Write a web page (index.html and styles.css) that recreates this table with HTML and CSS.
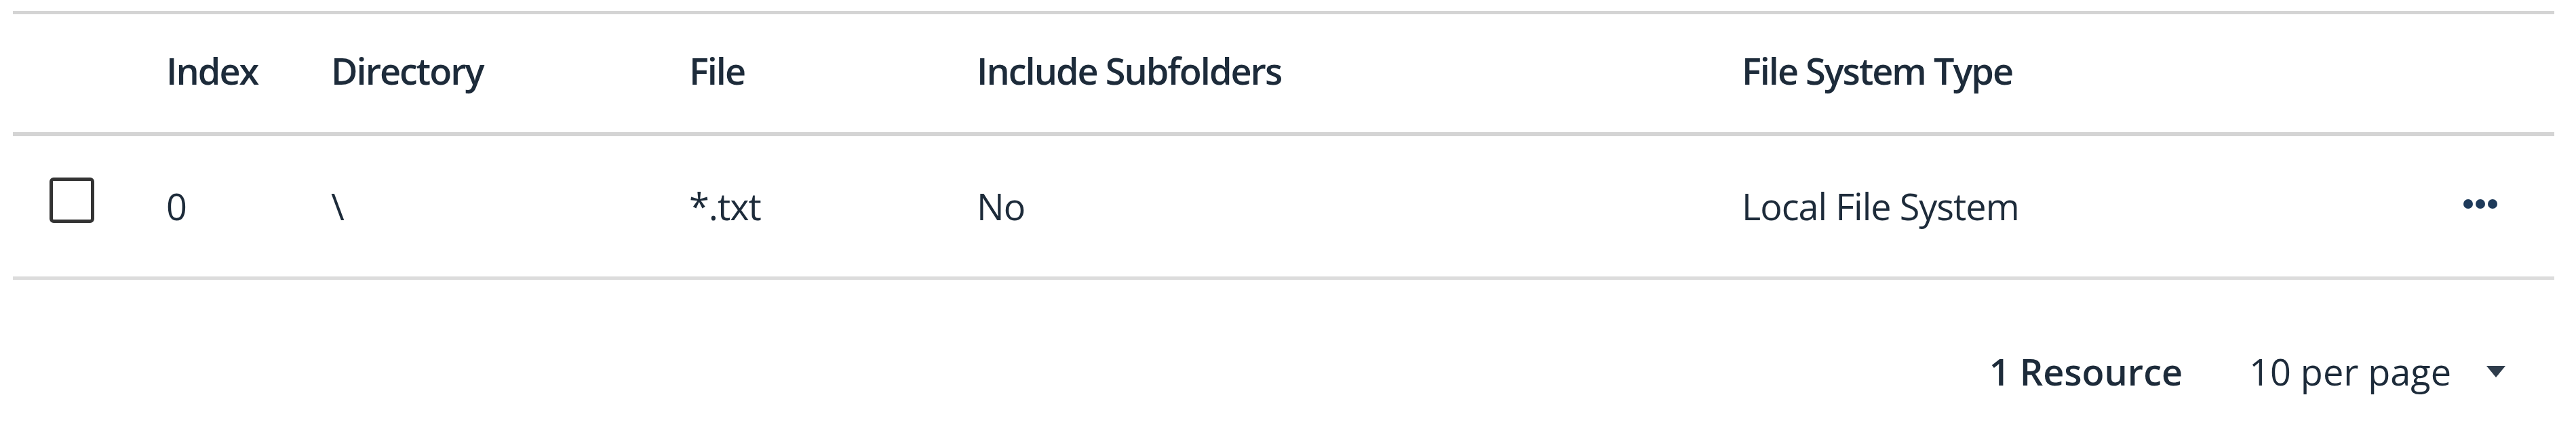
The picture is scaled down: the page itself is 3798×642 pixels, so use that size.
FILE: index.html
```html
<!DOCTYPE html>
<html lang="en">
<head>
<meta charset="utf-8">
<title>Resources</title>
<link rel="stylesheet" href="styles.css">
</head>
<body>
<div class="page">
  <div class="table">
    <div class="row head">
      <div class="cell"></div>
      <div class="cell">Index</div>
      <div class="cell">Directory</div>
      <div class="cell">File</div>
      <div class="cell">Include Subfolders</div>
      <div class="cell">File System Type</div>
      <div class="cell"></div>
    </div>
    <div class="row body">
      <div class="cell check-cell"><span class="checkbox"></span></div>
      <div class="cell">0</div>
      <div class="cell">\</div>
      <div class="cell">*.txt</div>
      <div class="cell">No</div>
      <div class="cell">Local File System</div>
      <div class="cell actions">
        <svg class="kebab" width="50" height="14" viewBox="0 0 50 14"><circle cx="7" cy="7" r="7"/><circle cx="25" cy="7" r="7"/><circle cx="43" cy="7" r="7"/></svg>
      </div>
    </div>
  </div>
  <div class="footer">
    <span class="count">1 Resource</span>
    <span class="perpage">10 per page</span>
    <span class="caret"></span>
  </div>
</div>
</body>
</html>
```

FILE: styles.css
```css
html, body {
  margin: 0;
  padding: 0;
  background: #ffffff;
}

body {
  font-family: "Open Sans", "Noto Sans", sans-serif;
  font-size: 54px;
  line-height: 72px;
  color: #1d2b3a;
  letter-spacing: -1px;
}

.page {
  width: 3747px;
  margin: 16px 0 0 19px;
}

.table {
  border-top: 5px solid #d4d4d4;
}

.row {
  display: grid;
  grid-template-columns: 226px 243px 528px 424px 1128px 1fr 200px;
  align-items: center;
}

.row.head {
  height: 180px;
  box-sizing: border-box;
  padding-bottom: 8px;
  border-bottom: 6px solid #d4d4d4;
  font-weight: 600;
  letter-spacing: -2px;
}

.row.body {
  height: 212px;
  box-sizing: border-box;
  padding-bottom: 1px;
  border-bottom: 5px solid #dcdcdc;
}

.cell {
  white-space: nowrap;
}

.check-cell {
  padding-left: 54px;
  display: flex;
  align-items: center;
  margin-bottom: 18px;
}

.checkbox {
  width: 66px;
  height: 67px;
  box-sizing: border-box;
  border: 5px solid #333333;
  border-radius: 6px;
  display: block;
}

.actions {
  display: flex;
  justify-content: flex-end;
  padding-right: 84px;
  margin-bottom: 6px;
}

.kebab {
  display: block;
  fill: #1e3a5a;
}

.footer {
  display: flex;
  justify-content: flex-end;
  align-items: center;
  padding-top: 99px;
  padding-right: 72px;
}

.count {
  font-weight: 600;
  letter-spacing: 0;
}

.perpage {
  margin-left: 98px;
  letter-spacing: 0;
}

.caret {
  margin-left: 52px;
  width: 0;
  height: 0;
  border-left: 14px solid transparent;
  border-right: 14px solid transparent;
  border-top: 17px solid #2f3d4c;
}
```
